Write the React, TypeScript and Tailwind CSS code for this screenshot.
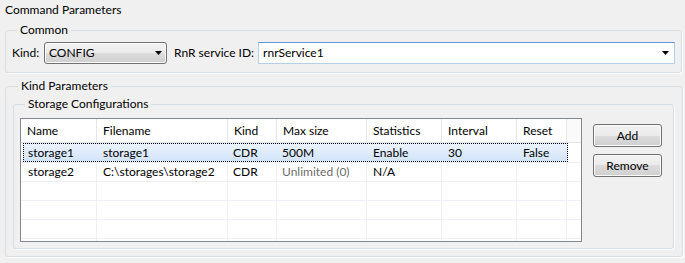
import React from 'react';

const cols = 'grid grid-cols-[76px_131px_49px_90px_75px_75px_50px_1fr]';

const headers = ['Name', 'Filename', 'Kind', 'Max size', 'Statistics', 'Interval', 'Reset', ''];

const rows = [
  { name: 'storage2', file: 'C:\\storages\\storage2', kind: 'CDR', max: 'Unlimited (0)', stats: 'N/A', interval: '', reset: '' },
];

const DownArrow = () => (
  <svg width="7" height="4" viewBox="0 0 7 4" className="block">
    <polygon points="0,0 7,0 3.5,4" fill="#000" />
  </svg>
);

const btn =
  'border border-[#707070] rounded-[3px] bg-[linear-gradient(#f2f2f2,#ebebeb_50%,#dddddd_50%,#cfcfcf)] shadow-[inset_0_0_0_1px_#fcfcfc]';

export default function App() {
  return (
    <div className="w-[685px] h-[263px] bg-[#f0f0f0] overflow-hidden font-['Lato',sans-serif] text-[12px] text-black whitespace-nowrap">
      <div className="h-[20px] leading-[20px] pl-[5px]">Command Parameters</div>

      <fieldset className="mt-[2px] ml-[5px] mr-[3px] h-[51px] border border-[#d5dfe5] rounded-[3px] px-[6px] shadow-[1px_1px_0_#fff]">
        <legend className="ml-[5px] px-[3px] leading-[16px]">Common</legend>
        <div className="flex items-center mt-[4px]">
          <span className="w-[32px] shrink-0">Kind:</span>
          <div className={`w-[123px] h-[22px] shrink-0 flex items-center justify-between pl-[4px] pr-[4px] ${btn}`}>
            <span>CONFIG</span>
            <DownArrow />
          </div>
          <span className="ml-[7px] mr-[4px] shrink-0">RnR service ID:</span>
          <div className="flex-1 h-[22px] bg-white border border-[#b4d0e9] border-t-[#5b9bd5] flex items-center justify-between pl-[4px] pr-[5px]">
            <span>rnrService1</span>
            <DownArrow />
          </div>
        </div>
      </fieldset>

      <fieldset className="mt-[5px] ml-[5px] mr-[2px] h-[179px] border border-[#d5dfe5] rounded-[3px] pl-[7px] pr-[8px] shadow-[1px_1px_0_#fff]">
        <legend className="ml-[5px] px-[3px] leading-[16px]">Kind Parameters</legend>
        <fieldset className="mt-[2px] h-[153px] border border-[#d5dfe5] rounded-[3px] pl-[6px] shadow-[1px_1px_0_#fff]">
          <legend className="ml-[5px] px-[3px] leading-[16px]">Storage Configurations</legend>
          <div className="flex items-start mt-[6px]">
            <div className="w-[562px] h-[124px] border border-[#828790] bg-white overflow-hidden">
              <div className={`${cols} h-[24px] border-b border-[#e5e5e5]`}>
                {headers.map((h, i) => (
                  <div
                    key={i}
                    className={`pl-[6px] leading-[23px] ${i < 7 ? 'border-r border-[#e5e5e5]' : 'bg-[#fafafa]'}`}
                  >
                    {h}
                  </div>
                ))}
              </div>

              <div className="h-[20px] border-b border-[#edf1f7] pl-[2px]">
                <div className="w-[545px] h-[19px] border border-dotted border-black bg-[linear-gradient(#eaf2fd,#d3e4f9)] grid grid-cols-[73px_131px_49px_90px_75px_75px_49px] leading-[17px]">
                  <div className="pl-[4px]">storage1</div>
                  <div className="pl-[6px]">storage1</div>
                  <div className="pl-[5px]">CDR</div>
                  <div className="pl-[5px]">500M</div>
                  <div className="pl-[6px]">Enable</div>
                  <div className="pl-[6px]">30</div>
                  <div className="pl-[6px]">False</div>
                </div>
              </div>

              {rows.map((r) => (
                <div key={r.name} className={`${cols} h-[19px] border-b border-[#edf1f7] leading-[18px]`}>
                  <div className="pl-[7px] border-r border-[#edf1f7]">{r.name}</div>
                  <div className="pl-[6px] border-r border-[#edf1f7]">{r.file}</div>
                  <div className="pl-[5px] border-r border-[#edf1f7]">{r.kind}</div>
                  <div className="pl-[5px] border-r border-[#edf1f7] text-[#6d6d6d]">{r.max}</div>
                  <div className="pl-[6px] border-r border-[#edf1f7]">{r.stats}</div>
                  <div className="pl-[6px] border-r border-[#edf1f7]">{r.interval}</div>
                  <div className="pl-[6px] border-r border-[#edf1f7]">{r.reset}</div>
                  <div />
                </div>
              ))}

              {[0, 1, 2, 3].map((n) => (
                <div key={n} className={`${cols} h-[19px] border-b border-[#edf1f7]`}>
                  {[0, 1, 2, 3, 4, 5, 6].map((c) => (
                    <div key={c} className="border-r border-[#edf1f7]" />
                  ))}
                  <div />
                </div>
              ))}
            </div>

            <div className="ml-[11px] mt-[6px] flex flex-col gap-[7px]">
              <button className={`w-[69px] h-[23px] ${btn}`}>Add</button>
              <button className={`w-[69px] h-[23px] ${btn}`}>Remove</button>
            </div>
          </div>
        </fieldset>
      </fieldset>
    </div>
  );
}
